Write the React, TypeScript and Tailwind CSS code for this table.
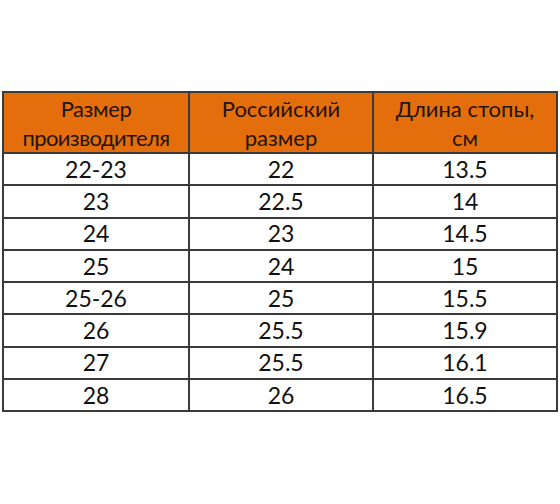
const rows = [
  ["22-23", "22", "13.5"],
  ["23", "22.5", "14"],
  ["24", "23", "14.5"],
  ["25", "24", "15"],
  ["25-26", "25", "15.5"],
  ["26", "25.5", "15.9"],
  ["27", "25.5", "16.1"],
  ["28", "26", "16.5"],
]

const headers = [
  ["Размер", "производителя"],
  ["Российский", "размер"],
  ["Длина стопы,", "см"],
]

export default function App() {
  return (
    <div className="w-[560px] h-[504px] bg-white pt-[91px] px-[2px] font-['Lato',sans-serif]">
      <div className="border-2 border-[#3a3a3a] w-[556px]">
        <div className="grid grid-cols-[186px_184px_1fr] bg-[#e46d0c] border-b-2 border-[#3a3a3a]">
          {headers.map((h, i) => (
            <div
              key={i}
              className={`h-[59px] flex flex-col items-center justify-center text-[22px] leading-[29px] text-[#241405] ${i < 2 ? "border-r-2 border-[#3a3a3a]" : ""}`}
            >
              <span className={i === 0 ? "tracking-[-0.4px]" : ""}>{h[0]}</span>
              <span className={i === 0 ? "tracking-[-0.6px]" : ""}>{h[1]}</span>
            </div>
          ))}
        </div>
        {rows.map((r, ri) => (
          <div
            key={ri}
            className={`grid grid-cols-[186px_184px_1fr] ${ri < rows.length - 1 ? "border-b-2 border-[#3a3a3a]" : ""}`}
          >
            {r.map((c, ci) => (
              <div
                key={ci}
                className={`h-[30.25px] flex items-center justify-center text-[23px] text-[#111] ${ci < 2 ? "border-r-2 border-[#3a3a3a]" : ""}`}
              >
                {c}
              </div>
            ))}
          </div>
        ))}
      </div>
    </div>
  )
}
